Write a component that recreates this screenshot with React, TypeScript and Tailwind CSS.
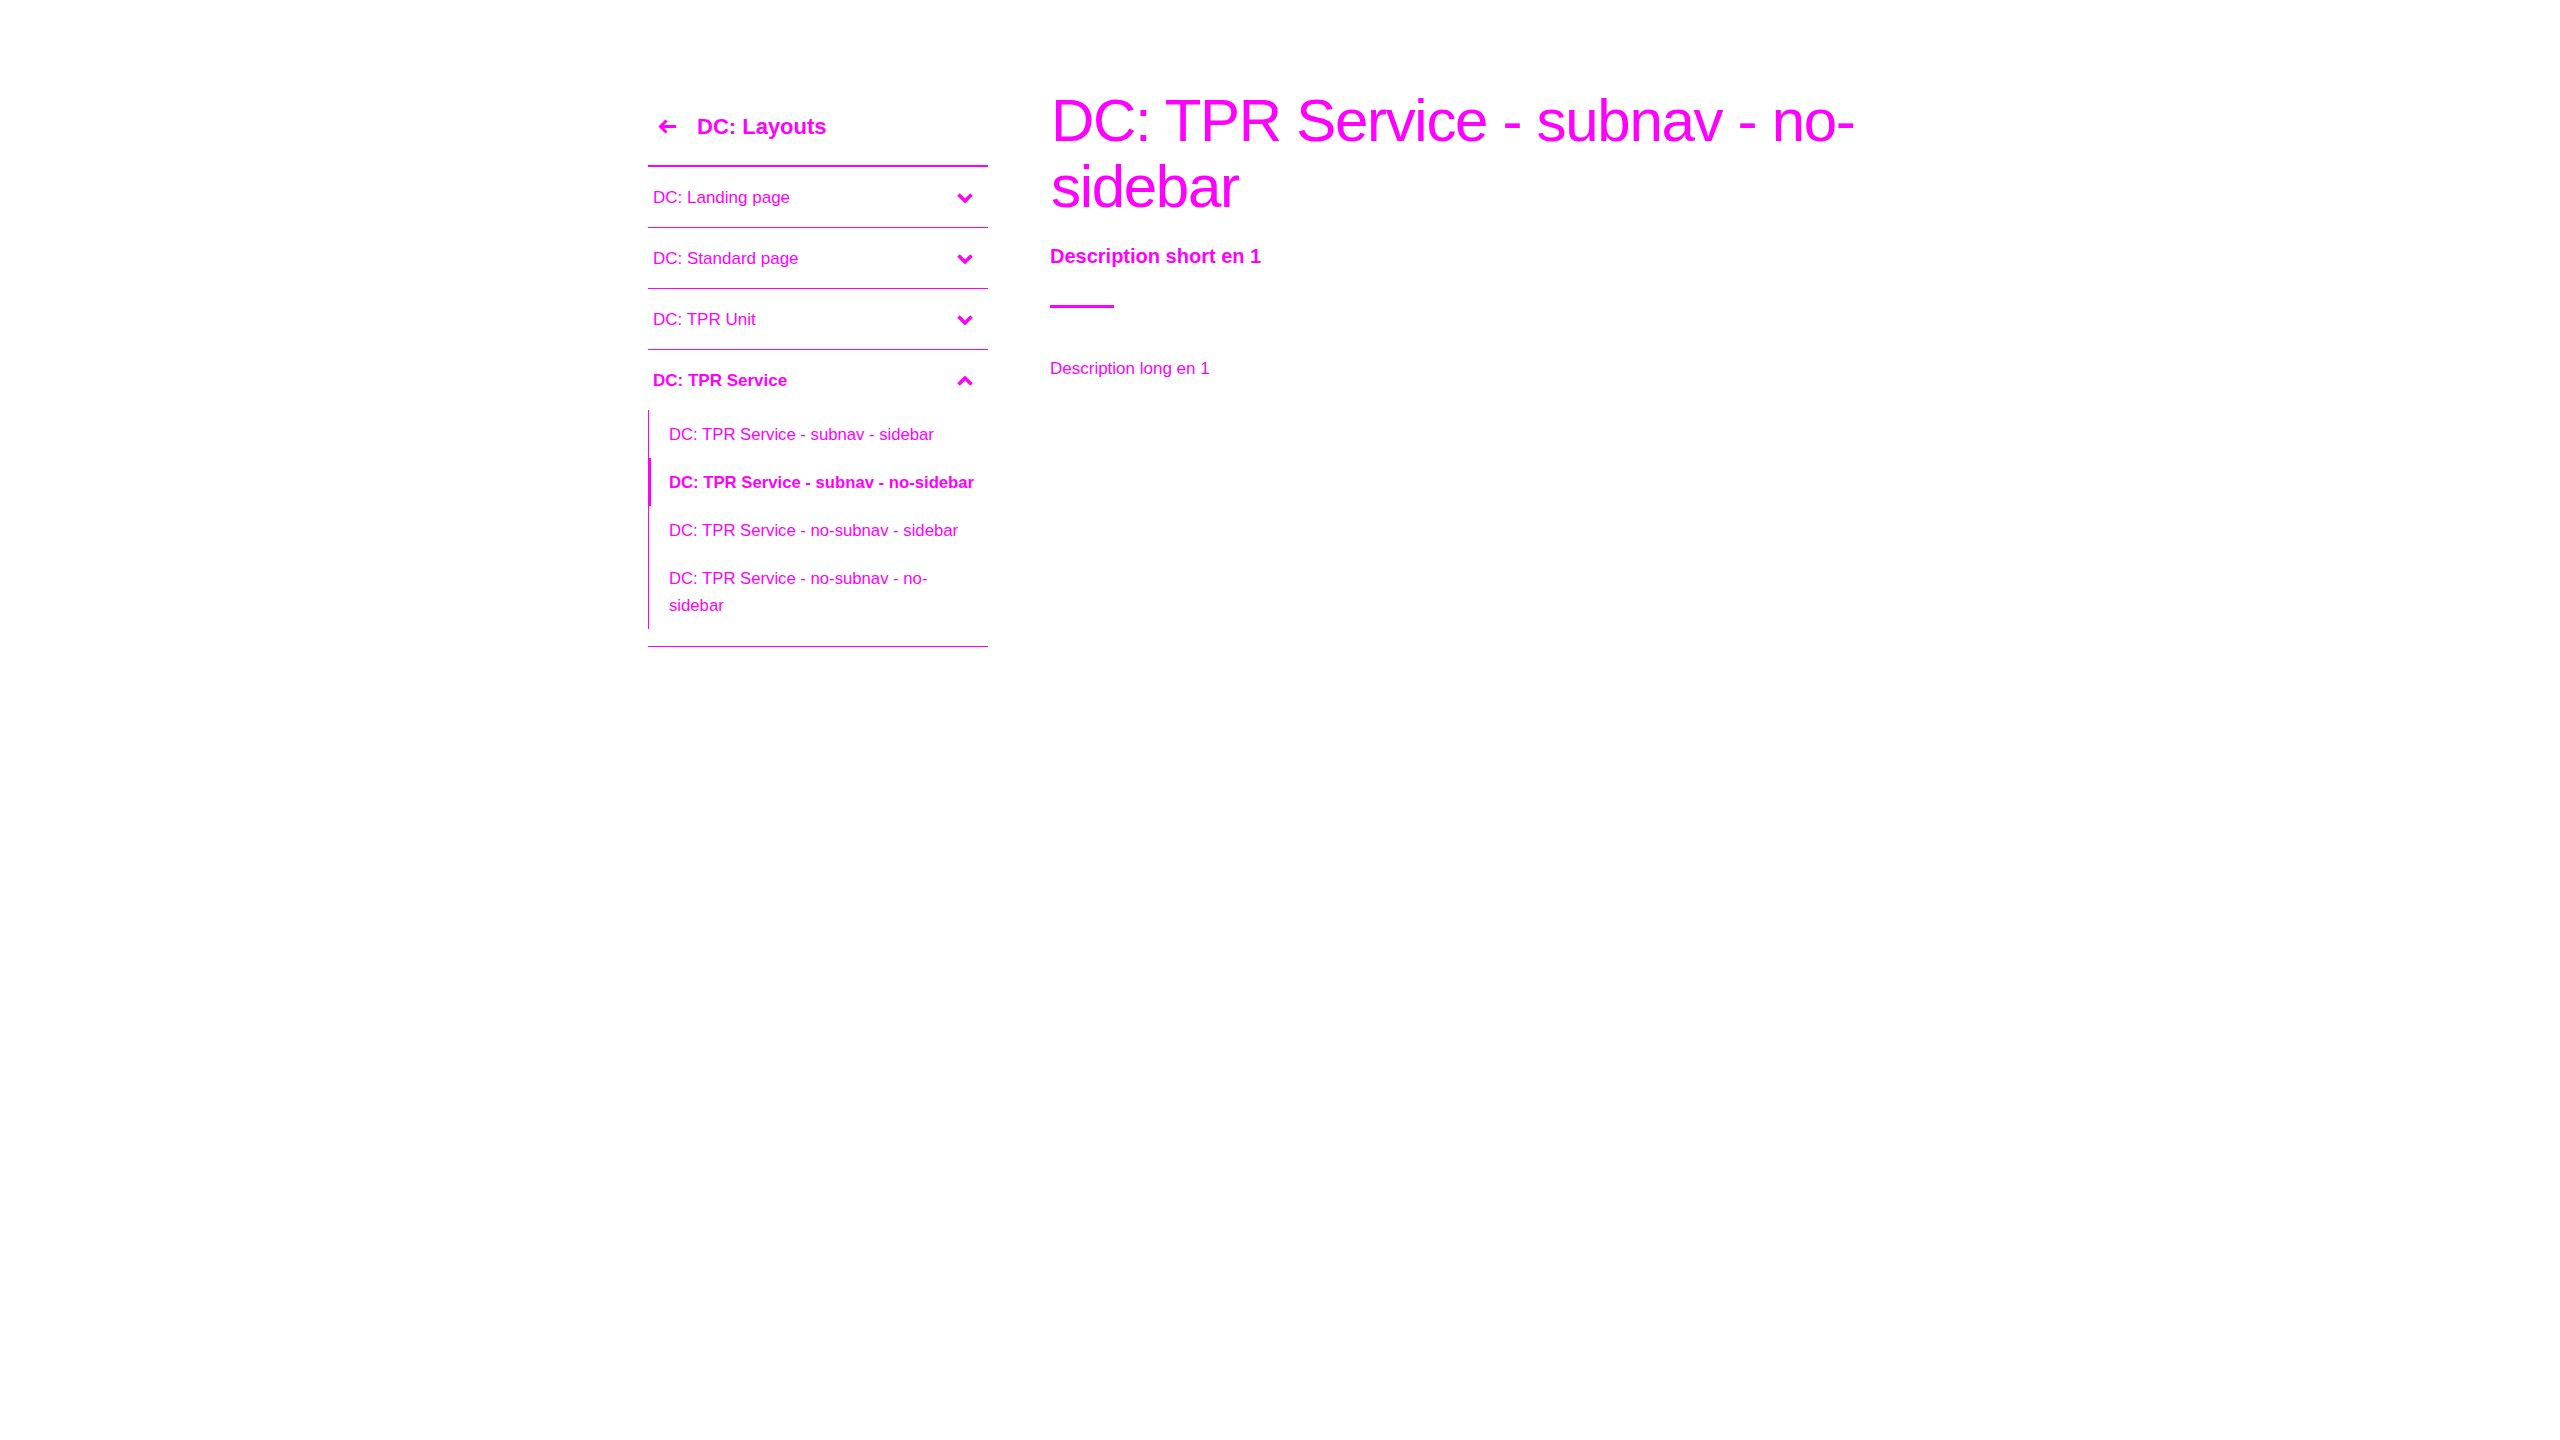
import React from 'react';

const MAGENTA = 'text-[#ff00ff]';

const SECTIONS: Array<{ label: string; open?: boolean }> = [
  { label: 'DC: Landing page' },
  { label: 'DC: Standard page' },
  { label: 'DC: TPR Unit' },
  { label: 'DC: TPR Service', open: true },
];

const SUB_ITEMS: Array<{ label: string; active?: boolean }> = [
  { label: 'DC: TPR Service - subnav - sidebar' },
  { label: 'DC: TPR Service - subnav - no-sidebar', active: true },
  { label: 'DC: TPR Service - no-subnav - sidebar' },
  { label: 'DC: TPR Service - no-subnav - no-sidebar' },
];

function Chevron({ up }: { up?: boolean }) {
  return (
    <svg width="16" height="10" viewBox="0 0 16 10" fill="none" className="shrink-0">
      <path
        d={up ? 'M1.5 8.5 L8 2 L14.5 8.5' : 'M1.5 1.5 L8 8 L14.5 1.5'}
        stroke="#ff00ff"
        strokeWidth="3.5"
      />
    </svg>
  );
}

function BackArrow() {
  return (
    <svg width="19" height="15" viewBox="0 0 19 15" fill="none">
      <path d="M18 7.5 H3 M8.5 1.5 L2.5 7.5 L8.5 13.5" stroke="#ff00ff" strokeWidth="3" />
    </svg>
  );
}

export default function App(): JSX.Element {
  return (
    <div className={`min-h-screen bg-white ${MAGENTA} font-['Liberation_Sans',Arial,sans-serif]`}>
      <div className="mx-auto flex w-[1264px] gap-[62px] pt-[88px]">
        {/* sidebar */}
        <aside className="w-[340px] shrink-0">
          <div className="flex h-[79px] items-center gap-[20px] pl-[10px] border-b-2 border-[#ff00ff]">
            <BackArrow />
            <span className="text-[22px] font-bold leading-[30px]">DC: Layouts</span>
          </div>
          {SECTIONS.map((s) => (
            <div key={s.label} className="border-b border-[#ff00ff]">
              <div className="flex h-[60px] items-center justify-between pl-[5px] pr-[15px] pt-px">
                <span className={`text-[17px] ${s.open ? 'font-bold' : ''}`}>{s.label}</span>
                <Chevron up={s.open} />
              </div>
              {s.open && (
                <ul className="mb-[17px] border-l border-[#ff00ff]">
                  {SUB_ITEMS.map((item) => (
                    <li key={item.label} className="relative py-[10.5px] pl-[20px] pr-[10px]">
                      {item.active && (
                        <span className="absolute -left-px top-0 h-full w-[3px] bg-[#ff00ff]" />
                      )}
                      <span className={`block text-[16.7px] leading-[27px] ${item.active ? 'font-bold' : ''}`}>
                        {item.label}
                      </span>
                    </li>
                  ))}
                </ul>
              )}
            </div>
          ))}
        </aside>

        {/* main */}
        <main className="flex-1">
          <h1 className="text-[60px] leading-[66px] font-normal tracking-[-1.3px] pl-px">
            DC: TPR Service - subnav - no-sidebar
          </h1>
          <p className="mt-[22px] text-[20px] leading-[28px] font-bold">Description short en 1</p>
          <div className="mt-[35px] h-[3px] w-16 bg-[#ff00ff]" />
          <p className="mt-[49px] text-[17px] leading-[24px]">Description long en 1</p>
        </main>
      </div>
    </div>
  );
}
